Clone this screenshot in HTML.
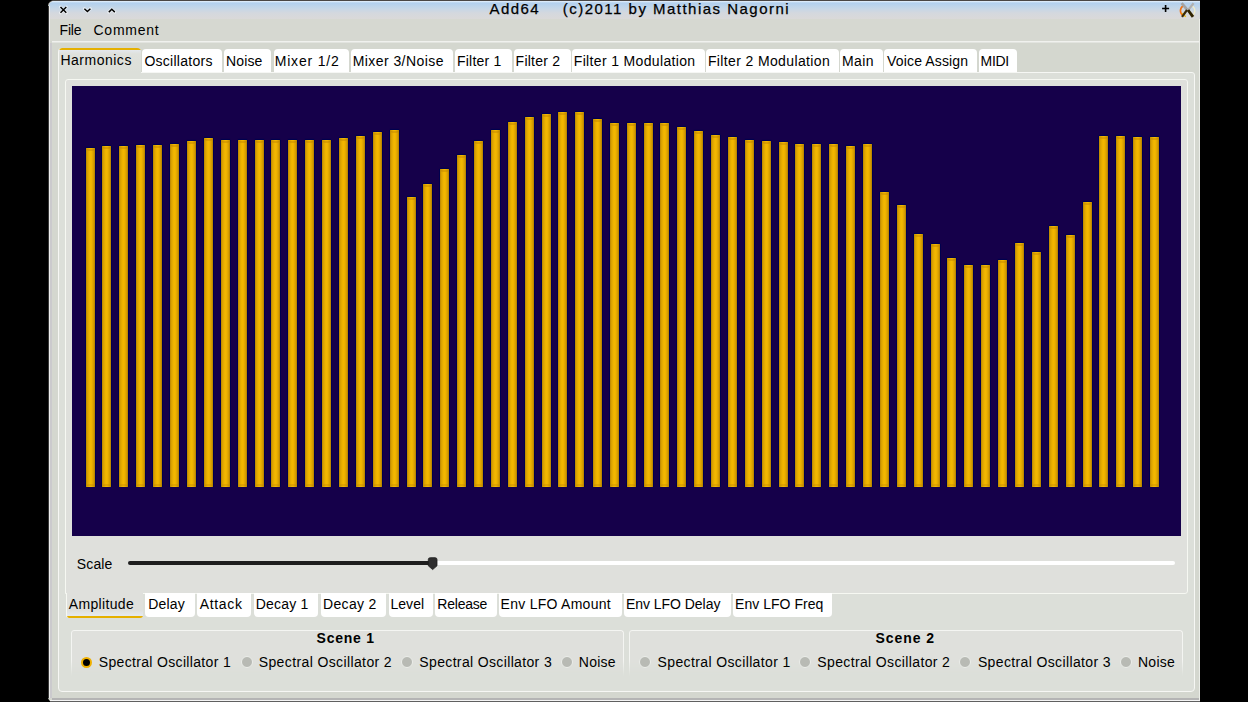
<!DOCTYPE html><html><head><meta charset="utf-8"><style>
*{margin:0;padding:0;box-sizing:border-box}
html,body{width:1248px;height:702px;overflow:hidden;background:#000}
body{position:relative;font-family:"Liberation Sans",sans-serif}
.t{position:absolute;line-height:normal;white-space:pre;color:#000}
#win{position:absolute;left:48px;top:0;width:1152px;height:702px;background:#d4d7cf;border-radius:6px 0 0 5px;border-top:1px solid #4a4644}
#title{position:absolute;left:49px;top:1px;width:1151px;height:18px;border-radius:5px 0 0 0;background:linear-gradient(#e8f2fc 0px,#b2d0ee 2px,#c4d6e8 7px,#d4d8de 12px,#dad9d9 18px)}
#menubar{position:absolute;left:49px;top:19px;width:1151px;height:22px;background:#d6d8d1}
#sep{position:absolute;left:52px;top:41px;width:1148px;height:2px;background:#f0f1ee;border-bottom:1px solid #e2e4df}
#wl0{position:absolute;left:48px;top:6px;width:1px;height:692px;background:#3a3a3a}
#wl1{position:absolute;left:49px;top:6px;width:1px;height:692px;background:#eeeeee}
#wl2{position:absolute;left:50px;top:43px;width:2px;height:655px;background:#cbcacd}
#wr{position:absolute;left:1199px;top:19px;width:1px;height:682px;background:#eceee9}
#wb1{position:absolute;left:52px;top:698px;width:1147px;height:2px;background:#b4b4b4}
#wb2{position:absolute;left:50px;top:700px;width:1150px;height:1px;background:#f4f4f4}
#wb3{position:absolute;left:50px;top:701px;width:1150px;height:1px;background:#606060}
#pane{position:absolute;left:58px;top:72px;width:1137px;height:620px;background:#dcdfd9;border:1px solid #f6f7f4;border-radius:0 3px 4px 4px}
.tab{position:absolute;top:49px;height:23px;background:#fff;border-radius:4px 4px 0 0}
.tabsel{position:absolute;top:48px;height:25px;background:linear-gradient(#e5b000 0,#e5b000 2px,#e4e8ee 2px,#dfe1dc 6px,#dcdfd9 24px);border-radius:4px 4px 0 0;border-left:1px solid #f6f7f4;border-top:0}
#frame{position:absolute;left:65px;top:79px;width:1123px;height:515px;background:#dfe0dc;border:1px solid #f6f8f2;border-radius:3px 3px 3px 0}
#plot{position:absolute;left:72px;top:86px;width:1109px;height:450px;background:#15004a;overflow:hidden}
.bar::before{content:'';position:absolute;left:1px;right:1px;top:1px;height:2px;background:rgba(170,110,0,0.3);border-radius:0 0 50% 50%}
.bar::after{content:'';position:absolute;left:1px;right:1px;bottom:1px;height:2px;background:rgba(170,110,0,0.25);border-radius:50% 50% 0 0}
.bar{position:absolute;width:9px;background:linear-gradient(90deg,#b88400 0,#dca400 18%,#f4b800 45%,#f0b400 60%,#d9a000 82%,#b07c00 100%);box-shadow:-1px 0 0 #00004e,1px 0 0 #00004e,0 -1px 1px #00004e}
#trackL{position:absolute;left:128px;top:561px;width:302px;height:4px;background:#1e1e1e;border-radius:2px 0 0 2px}
#trackR{position:absolute;left:436px;top:561px;width:739px;height:4px;background:#fff;border-radius:0 2px 2px 0}
.tab2{position:absolute;top:593px;height:24px;background:#fff;border-radius:0 0 4px 4px}
.tab2sel{position:absolute;top:593px;height:25px;background:linear-gradient(#dfe0dc 0,#dfe0dc 17px,#e4e8ee 22px,#e4e8ee 23px,#e5b000 23px,#e5b000 25px);border-radius:0 0 3px 3px;border-left:1px solid #f6f8f2}
.grp{position:absolute;top:629.5px;height:60px;border:1px solid #f4f5f2;border-bottom:none;border-radius:3px 3px 0 0;background:#dfe0dc;
 -webkit-mask-image:linear-gradient(#000 0,#000 30px,transparent 46px)}
.radio{position:absolute;top:656px;width:12px;height:12px;border-radius:50%;background:#b8bab4;border:1px solid #eceeea}
.radio.sel{background:#000;border:2px solid #f0b000;width:11px;height:11px;margin:0.5px 0 0 0.5px}
</style></head><body>
<div id="win"></div>
<div id="title"></div>
<div id="menubar"></div>
<div id="sep"></div>
<div id="wl0"></div><div id="wl1"></div><div id="wl2"></div><div id="wr"></div><div id="wb1"></div><div id="wb2"></div><div id="wb3"></div>
<svg style="position:absolute;left:56px;top:3px" width="64" height="14" viewBox="0 0 64 14">
<g stroke="#fff" stroke-width="3" stroke-linecap="round" fill="none" opacity="0.55">
<path d="M4.5 4 L10.3 9.8 M10.3 4 L4.5 9.8"/><path d="M28.4 5.7 L31.4 8.5 L34.4 5.7"/><path d="M52.8 9.1 L55.8 6.3 L58.8 9.1"/></g>
<g stroke="#000" stroke-width="1.45" stroke-linecap="butt" fill="none">
<path d="M4.5 4 L10.3 9.8 M10.3 4 L4.5 9.8"/><path d="M28.4 5.7 L31.4 8.5 L34.4 5.7"/><path d="M52.8 9.1 L55.8 6.3 L58.8 9.1"/></g></svg>
<svg style="position:absolute;left:1158px;top:1px" width="40" height="18" viewBox="0 0 40 18">
<path d="M7.6 4 V11 M4.1 7.5 H11.1" stroke="#000" stroke-width="1.6"/>
<path d="M25.5 4.6 A6.6 6 0 0 0 25.6 14.8" fill="none" stroke="#f07010" stroke-width="1.6"/>
<path d="M24.3 12 A6.6 6 0 0 0 28 15.6" fill="none" stroke="#f0c020" stroke-width="1.4"/>
<path d="M33.5 4.6 A6.6 6 0 0 1 34 14.8" fill="none" stroke="#f2ecc8" stroke-width="1.2"/>
<path d="M23.6 2.2 L29.6 9.2" stroke="#a4a4a4" stroke-width="2.8"/>
<path d="M35.6 2.2 L30 9.2" stroke="#b0b0b0" stroke-width="2.2"/>
<path d="M29 9 L24 15.8" stroke="#3a2a08" stroke-width="2.2"/>
<path d="M30 9 L35 15.8" stroke="#302200" stroke-width="2.9"/>
</svg>
<div class="t" style="-webkit-text-stroke:0.25px #000;left:489.40px;top:0px;font-size:15px;letter-spacing:1.483px;">Add64    (c)2011 by Matthias Nagorni</div>
<div class="t" style="left:59.50px;top:22px;font-size:14px;letter-spacing:-0.167px;">File</div>
<div class="t" style="left:93.50px;top:22px;font-size:14px;letter-spacing:0.75px;">Comment</div>
<div id="pane"></div>
<div class="tabsel" style="left:58px;width:83px"></div>
<div class="tab" style="left:141.5px;width:80.0px"></div>
<div class="tab" style="left:223.5px;width:47.5px"></div>
<div class="tab" style="left:273.5px;width:75.0px"></div>
<div class="tab" style="left:350.5px;width:102.5px"></div>
<div class="tab" style="left:455px;width:56.5px"></div>
<div class="tab" style="left:513.5px;width:57.0px"></div>
<div class="tab" style="left:572px;width:132.5px"></div>
<div class="tab" style="left:705.5px;width:133.0px"></div>
<div class="tab" style="left:840px;width:42.5px"></div>
<div class="tab" style="left:884px;width:93px"></div>
<div class="tab" style="left:978.5px;width:38.0px"></div>
<div class="t" style="left:60.40px;top:52px;font-size:14px;letter-spacing:0.511px;">Harmonics</div>
<div class="t" style="left:144.40px;top:53px;font-size:14px;letter-spacing:0.27px;">Oscillators</div>
<div class="t" style="left:226.00px;top:53px;font-size:14px;letter-spacing:0.125px;">Noise</div>
<div class="t" style="left:274.70px;top:53px;font-size:14px;letter-spacing:0.812px;">Mixer 1/2</div>
<div class="t" style="left:352.70px;top:53px;font-size:14px;letter-spacing:0.433px;">Mixer 3/Noise</div>
<div class="t" style="left:456.90px;top:53px;font-size:14px;letter-spacing:0.243px;">Filter 1</div>
<div class="t" style="left:515.60px;top:53px;font-size:14px;letter-spacing:0.243px;">Filter 2</div>
<div class="t" style="left:573.75px;top:53px;font-size:14px;letter-spacing:0.347px;">Filter 1 Modulation</div>
<div class="t" style="left:707.90px;top:53px;font-size:14px;letter-spacing:0.371px;">Filter 2 Modulation</div>
<div class="t" style="left:842.00px;top:53px;font-size:14px;letter-spacing:0.367px;">Main</div>
<div class="t" style="left:887.10px;top:53px;font-size:14px;letter-spacing:0.145px;">Voice Assign</div>
<div class="t" style="left:980.50px;top:53px;font-size:14px;letter-spacing:-0.267px;">MIDI</div>
<div id="frame"></div>
<div id="plot">
<div class="bar" style="left:14.00px;top:62px;height:339px"></div>
<div class="bar" style="left:30.00px;top:60px;height:341px"></div>
<div class="bar" style="left:47.00px;top:60px;height:341px"></div>
<div class="bar" style="left:64.00px;top:59px;height:342px"></div>
<div class="bar" style="left:81.00px;top:59px;height:342px"></div>
<div class="bar" style="left:97.50px;top:58px;height:343px"></div>
<div class="bar" style="left:114.50px;top:55px;height:346px"></div>
<div class="bar" style="left:131.80px;top:52px;height:349px"></div>
<div class="bar" style="left:148.90px;top:54px;height:347px"></div>
<div class="bar" style="left:166.10px;top:54px;height:347px"></div>
<div class="bar" style="left:182.50px;top:54px;height:347px"></div>
<div class="bar" style="left:199.10px;top:54px;height:347px"></div>
<div class="bar" style="left:216.20px;top:54px;height:347px"></div>
<div class="bar" style="left:233.30px;top:54px;height:347px"></div>
<div class="bar" style="left:249.80px;top:54px;height:347px"></div>
<div class="bar" style="left:266.90px;top:52px;height:349px"></div>
<div class="bar" style="left:284.00px;top:50px;height:351px"></div>
<div class="bar" style="left:301.10px;top:46px;height:355px"></div>
<div class="bar" style="left:318.20px;top:44px;height:357px"></div>
<div class="bar" style="left:334.50px;top:111px;height:290px"></div>
<div class="bar" style="left:351.00px;top:98px;height:303px"></div>
<div class="bar" style="left:368.20px;top:83px;height:318px"></div>
<div class="bar" style="left:385.30px;top:69px;height:332px"></div>
<div class="bar" style="left:401.80px;top:55px;height:346px"></div>
<div class="bar" style="left:418.90px;top:44px;height:357px"></div>
<div class="bar" style="left:436.00px;top:36px;height:365px"></div>
<div class="bar" style="left:453.10px;top:31px;height:370px"></div>
<div class="bar" style="left:469.90px;top:28px;height:373px"></div>
<div class="bar" style="left:486.20px;top:26px;height:375px"></div>
<div class="bar" style="left:503.40px;top:26px;height:375px"></div>
<div class="bar" style="left:520.50px;top:33px;height:368px"></div>
<div class="bar" style="left:537.80px;top:37px;height:364px"></div>
<div class="bar" style="left:554.90px;top:37px;height:364px"></div>
<div class="bar" style="left:571.50px;top:37px;height:364px"></div>
<div class="bar" style="left:588.20px;top:37px;height:364px"></div>
<div class="bar" style="left:605.30px;top:41px;height:360px"></div>
<div class="bar" style="left:622.40px;top:45px;height:356px"></div>
<div class="bar" style="left:638.80px;top:49px;height:352px"></div>
<div class="bar" style="left:655.70px;top:51px;height:350px"></div>
<div class="bar" style="left:672.80px;top:54px;height:347px"></div>
<div class="bar" style="left:689.90px;top:55px;height:346px"></div>
<div class="bar" style="left:707.00px;top:56px;height:345px"></div>
<div class="bar" style="left:723.30px;top:58px;height:343px"></div>
<div class="bar" style="left:740.10px;top:58px;height:343px"></div>
<div class="bar" style="left:757.20px;top:58px;height:343px"></div>
<div class="bar" style="left:774.30px;top:60px;height:341px"></div>
<div class="bar" style="left:790.60px;top:58px;height:343px"></div>
<div class="bar" style="left:807.80px;top:106px;height:295px"></div>
<div class="bar" style="left:824.90px;top:119px;height:282px"></div>
<div class="bar" style="left:842.00px;top:148px;height:253px"></div>
<div class="bar" style="left:859.00px;top:158px;height:243px"></div>
<div class="bar" style="left:875.40px;top:172px;height:229px"></div>
<div class="bar" style="left:892.20px;top:179px;height:222px"></div>
<div class="bar" style="left:909.00px;top:179px;height:222px"></div>
<div class="bar" style="left:926.20px;top:174px;height:227px"></div>
<div class="bar" style="left:942.60px;top:157px;height:244px"></div>
<div class="bar" style="left:959.70px;top:166px;height:235px"></div>
<div class="bar" style="left:976.80px;top:140px;height:261px"></div>
<div class="bar" style="left:993.80px;top:149px;height:252px"></div>
<div class="bar" style="left:1010.70px;top:116px;height:285px"></div>
<div class="bar" style="left:1027.10px;top:50px;height:351px"></div>
<div class="bar" style="left:1043.90px;top:50px;height:351px"></div>
<div class="bar" style="left:1061.20px;top:51px;height:350px"></div>
<div class="bar" style="left:1078.30px;top:51px;height:350px"></div>
</div>
<div class="t" style="left:76.80px;top:556px;font-size:14px;letter-spacing:0.125px;">Scale</div>
<div id="trackL"></div><div id="trackR"></div>
<svg style="position:absolute;left:426px;top:555px" width="14" height="17" viewBox="0 0 14 17">
<path d="M2.3 4.5 Q2.3 2.7 4.3 2.7 L9 2.7 Q11 2.7 11 4.5 L11 10.8 L6.65 14.6 L2.3 10.8 Z" fill="#2e2e2e" stroke="#1c1c1c" stroke-width="0.8"/></svg>
<div class="tab2sel" style="left:66px;width:77px"></div>
<div class="tab2" style="left:145px;width:49.5px"></div>
<div class="tab2" style="left:197px;width:54px"></div>
<div class="tab2" style="left:253.5px;width:64.5px"></div>
<div class="tab2" style="left:321px;width:65px"></div>
<div class="tab2" style="left:388.5px;width:44.0px"></div>
<div class="tab2" style="left:435px;width:61.5px"></div>
<div class="tab2" style="left:498.5px;width:123.0px"></div>
<div class="tab2" style="left:623.5px;width:107.5px"></div>
<div class="tab2" style="left:733px;width:99px"></div>
<div class="t" style="left:68.80px;top:596px;font-size:14px;letter-spacing:0.336px;">Amplitude</div>
<div class="t" style="left:148.30px;top:596px;font-size:14px;letter-spacing:0.175px;">Delay</div>
<div class="t" style="left:199.80px;top:596px;font-size:14px;letter-spacing:0.64px;">Attack</div>
<div class="t" style="left:255.70px;top:596px;font-size:14px;letter-spacing:0.191px;">Decay 1</div>
<div class="t" style="left:323.00px;top:596px;font-size:14px;letter-spacing:0.333px;">Decay 2</div>
<div class="t" style="left:390.40px;top:596px;font-size:14px;letter-spacing:0.075px;">Level</div>
<div class="t" style="left:437.30px;top:596px;font-size:14px;letter-spacing:-0.217px;">Release</div>
<div class="t" style="left:500.60px;top:596px;font-size:14px;letter-spacing:0.266px;">Env LFO Amount</div>
<div class="t" style="left:626.00px;top:596px;font-size:14px;letter-spacing:-0.042px;">Env LFO Delay</div>
<div class="t" style="left:735.10px;top:596px;font-size:14px;letter-spacing:0.027px;">Env LFO Freq</div>
<div class="grp" style="left:70.5px;width:553px"></div>
<div class="grp" style="left:629px;width:553.5px"></div>
<div class="t" style="left:316.60px;top:630px;font-size:14px;letter-spacing:0.75px;font-weight:bold;">Scene 1</div>
<div class="t" style="left:875.40px;top:630px;font-size:14px;letter-spacing:0.966px;font-weight:bold;">Scene 2</div>
<div class="radio sel" style="left:80.2px"></div>
<div class="radio" style="left:240.5px"></div>
<div class="radio" style="left:400.9px"></div>
<div class="radio" style="left:561.0px"></div>
<div class="radio" style="left:639.0px"></div>
<div class="radio" style="left:799.0px"></div>
<div class="radio" style="left:959.3px"></div>
<div class="radio" style="left:1119.9px"></div>
<div class="t" style="left:98.80px;top:654px;font-size:14px;letter-spacing:0.33px;">Spectral Oscillator 1</div>
<div class="t" style="left:258.70px;top:654px;font-size:14px;letter-spacing:0.385px;">Spectral Oscillator 2</div>
<div class="t" style="left:419.30px;top:654px;font-size:14px;letter-spacing:0.355px;">Spectral Oscillator 3</div>
<div class="t" style="left:578.80px;top:654px;font-size:14px;letter-spacing:0.225px;">Noise</div>
<div class="t" style="left:657.60px;top:654px;font-size:14px;letter-spacing:0.37px;">Spectral Oscillator 1</div>
<div class="t" style="left:817.30px;top:654px;font-size:14px;letter-spacing:0.365px;">Spectral Oscillator 2</div>
<div class="t" style="left:977.90px;top:654px;font-size:14px;letter-spacing:0.37px;">Spectral Oscillator 3</div>
<div class="t" style="left:1137.90px;top:654px;font-size:14px;letter-spacing:0.3px;">Noise</div>
</body></html>
